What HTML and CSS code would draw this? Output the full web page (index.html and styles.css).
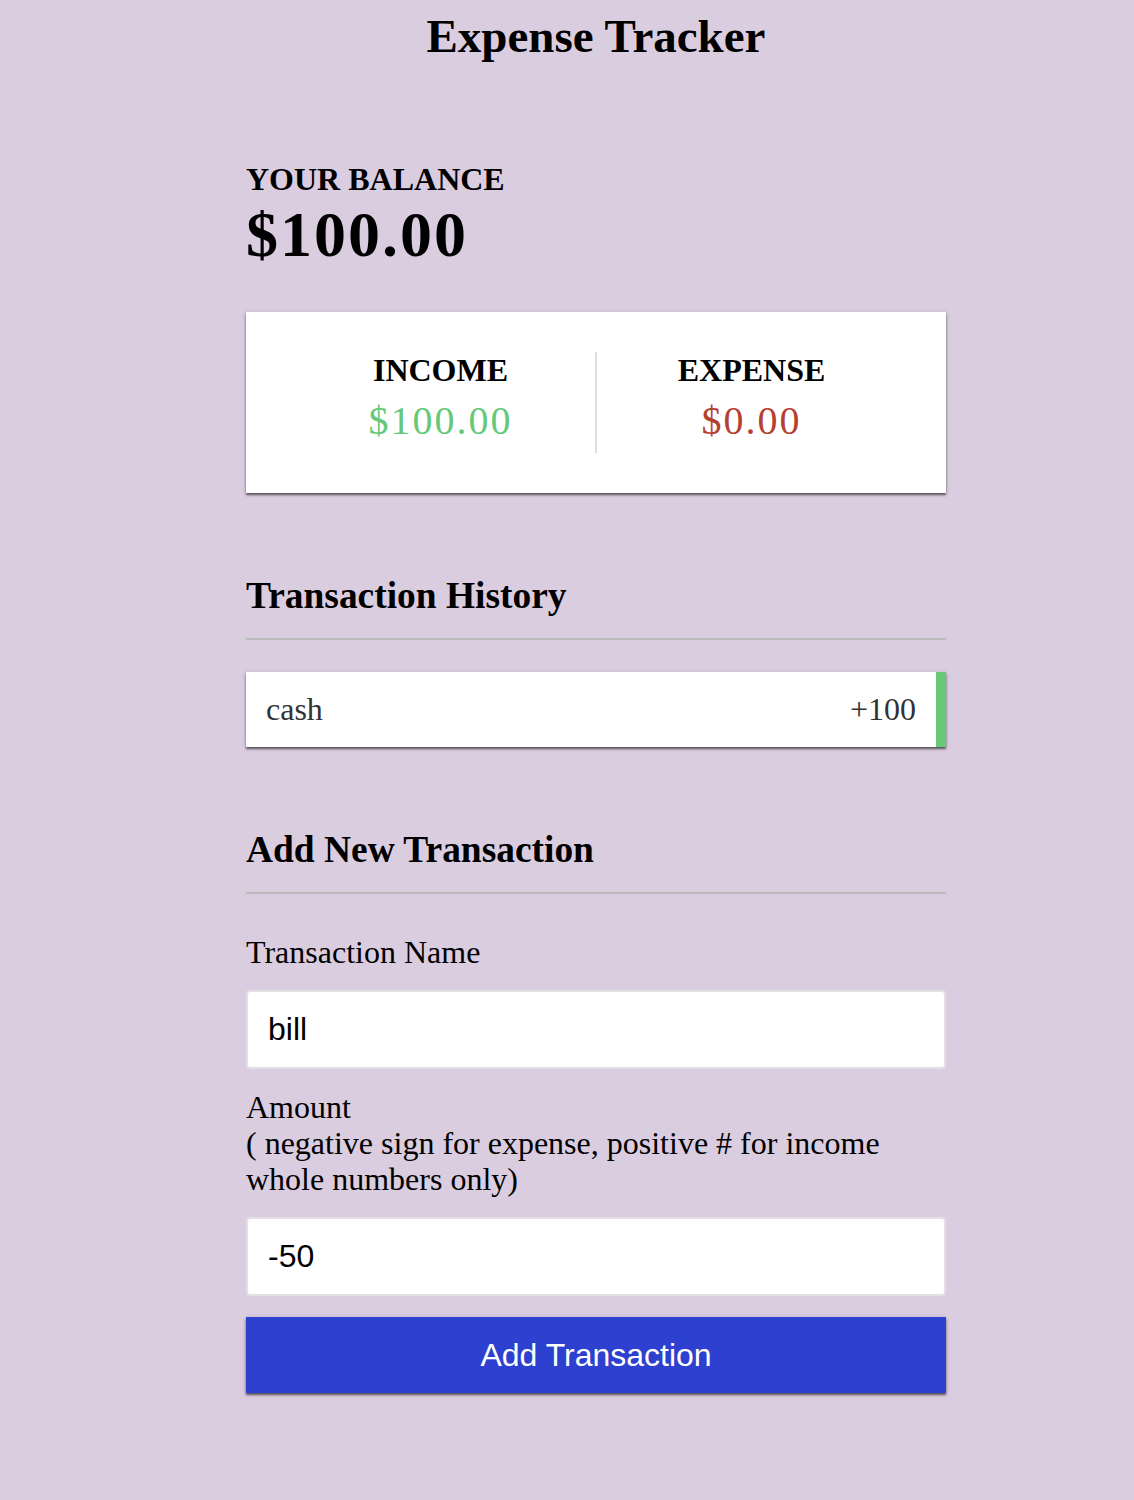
FILE: index.html
```html
<!DOCTYPE html>
<html lang="en">
<head>
<meta charset="utf-8">
<title>Expense Tracker</title>
<link rel="stylesheet" href="styles.css">
</head>
<body>
<h2 class="title">Expense Tracker</h2>
<div class="container">
  <h4 class="caps">Your Balance</h4>
  <h1 class="balance">$100.00</h1>

  <div class="inc-exp">
    <div class="inc-exp-col first">
      <h4 class="caps">Income</h4>
      <p class="money plus">$100.00</p>
    </div>
    <div class="inc-exp-col">
      <h4 class="caps">Expense</h4>
      <p class="money minus">$0.00</p>
    </div>
  </div>

  <h3 class="section">Transaction History</h3>
  <ul class="list">
    <li class="list-item plus"><span>cash</span><span>+100</span></li>
  </ul>

  <h3 class="section">Add New Transaction</h3>
  <form class="form">
    <div class="form-control">
      <label class="label" for="text">Transaction Name</label>
      <input class="field" type="text" id="text" value="bill">
    </div>
    <div class="form-control">
      <label class="label" for="amount">Amount<br>( negative sign for expense, positive # for income<br>whole numbers only)</label>
      <input class="field" type="text" id="amount" value="-50">
    </div>
    <button class="btn" type="button">Add Transaction</button>
  </form>
</div>
</body>
</html>
```
FILE: styles.css
```css
* {
  box-sizing: border-box;
}

body {
  margin: 0;
  background-color: #dbcde0;
  font-family: "Liberation Serif", "Times New Roman", serif;
  font-size: 32px;
  line-height: 36px;
  color: #000;
}

.title {
  margin: 9px 0 0 58px;
  text-align: center;
  font-size: 47px;
  line-height: 54px;
  font-weight: bold;
}

.container {
  width: 700px;
  margin: 98px 0 0 246px;
}

.caps {
  margin: 0;
  font-size: 32px;
  line-height: 36px;
  font-weight: bold;
  text-transform: uppercase;
}

.balance {
  margin: 0;
  font-size: 64px;
  line-height: 75px;
  font-weight: bold;
  letter-spacing: 2px;
}

.inc-exp {
  display: flex;
  background-color: #fff;
  padding: 40px;
  margin: 40px 0;
  box-shadow: 0 2px 2px rgba(0, 0, 0, 0.55), 0 1px 5px rgba(0, 0, 0, 0.14);
}

.inc-exp-col {
  flex: 1;
  text-align: center;
}

.inc-exp-col.first {
  border-right: 2px solid #dedede;
}

.money {
  font-size: 40px;
  line-height: 45px;
  letter-spacing: 2px;
  margin: 10px 0;
}

.money.plus {
  color: #66c97a;
}

.money.minus {
  color: #b6402f;
}

.section {
  margin: 80px 0 20px;
  padding-bottom: 20px;
  border-bottom: 2px solid #bbbbbb;
  font-size: 37.44px;
  line-height: 45px;
  font-weight: bold;
}

.list {
  list-style: none;
  padding: 0;
  margin: 32px 0 80px;
}

.list-item {
  display: flex;
  justify-content: space-between;
  background-color: #fff;
  color: #333;
  padding: 20px;
  line-height: 35px;
  margin: 20px 0;
  box-shadow: 0 2px 2px rgba(0, 0, 0, 0.55), 0 1px 5px rgba(0, 0, 0, 0.14);
}

.list-item.plus {
  border-right: 10px solid #66c97a;
}

.form {
  margin: 0;
}

.label {
  display: inline-block;
  margin: 20px 0;
  line-height: 36px;
}

.field {
  display: block;
  width: 100%;
  height: 79px;
  margin: 0;
  padding: 0 20px;
  border: 2px solid #e2e0e3;
  border-radius: 4px;
  background: #fff;
  font-family: "Liberation Sans", Arial, sans-serif;
  font-size: 32px;
  color: #000;
  outline: none;
}

.btn {
  display: block;
  width: 100%;
  height: 76px;
  margin: 21px 0 60px;
  padding: 0 20px;
  border: 0;
  background-color: #2e40cf;
  color: #fff;
  font-family: "Liberation Sans", Arial, sans-serif;
  font-size: 32px;
  box-shadow: 0 2px 2px rgba(0, 0, 0, 0.55), 0 1px 5px rgba(0, 0, 0, 0.14);
  cursor: pointer;
}
```
